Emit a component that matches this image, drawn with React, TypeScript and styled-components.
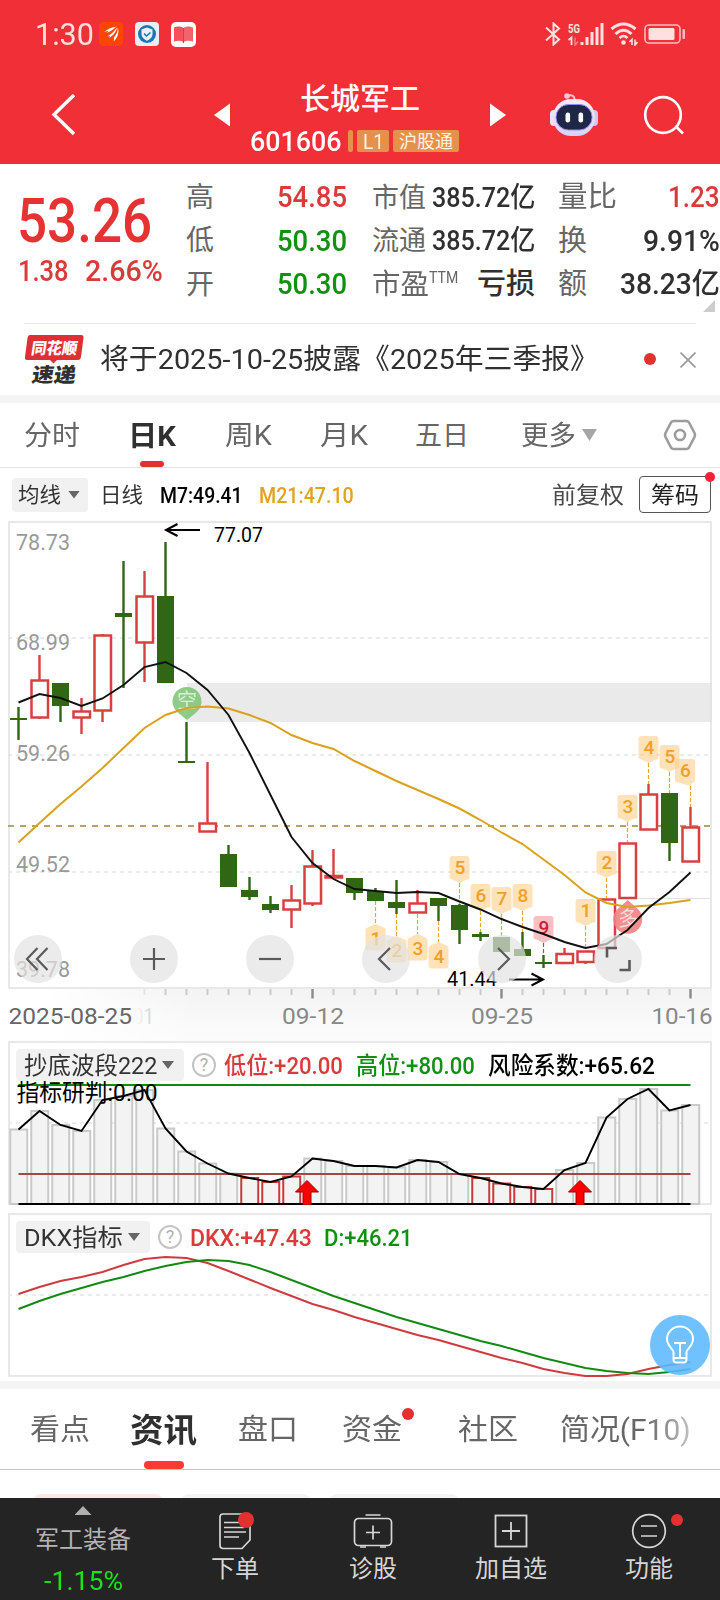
import React, { useLayoutEffect, useRef, useState } from "react";
import styled, { createGlobalStyle } from "styled-components";

const FONT = `Roboto, "Noto Sans CJK SC", sans-serif`;
const RED = "#f12f37";
const UP = "#d93a3a";
const DOWN = "#119011";
const CANDLE_RED = "#d84040";
const CANDLE_GREEN = "#306614";

const Global = createGlobalStyle`
  * { box-sizing: border-box; }
  body { margin: 0; background: #fff; font-family: ${FONT}; }
  svg { display: block; flex: none; }
`;

const Page = styled.div`
  width: 720px;
  height: 1600px;
  overflow: hidden;
  display: flex;
  flex-direction: column;
  background: #fff;
`;

/* ---------- text that is condensed or widened to a given measure ---------- */

const FitBox = styled.span<{ $w: number; $size: number; $color?: string; $weight?: number }>`
  display: inline-block;
  flex: none;
  width: ${(p) => p.$w}px;
  padding-top: 2px;
  font-size: ${(p) => p.$size}px;
  line-height: 1.2;
  font-weight: ${(p) => p.$weight ?? 400};
  color: ${(p) => p.$color ?? "inherit"};
  white-space: nowrap;
`;
const FitInner = styled.span`
  display: inline-block;
  transform-origin: left center;
`;

type FitProps = { w: number; size: number; color?: string; weight?: number; children: React.ReactNode };

function Fit({ w, size, color, weight, children }: FitProps) {
  const ref = useRef<HTMLSpanElement>(null);
  const [scale, setScale] = useState(1);
  useLayoutEffect(() => {
    if (ref.current && ref.current.offsetWidth) setScale(w / ref.current.offsetWidth);
  }, [w, size, children]);
  return (
    <FitBox $w={w} $size={size} $color={color} $weight={weight}>
      <FitInner ref={ref} style={{ transform: `scaleX(${scale})` }}>{children}</FitInner>
    </FitBox>
  );
}

/* ---------- status bar ---------- */

const StatusBar = styled.div`
  height: 68px;
  flex: none;
  display: flex;
  align-items: center;
  background: ${RED};
  padding: 0 34px 0 35px;
`;
const AppIcons = styled.div`
  display: flex;
  gap: 12px;
  margin-left: 5px;
`;
const SystemIcons = styled.div`
  display: flex;
  margin-left: auto;
  gap: 6px;
`;

function Status() {
  const c = "#ffe0e1";
  return (
    <StatusBar>
      <Fit w={59} size={31} color={c}>1:30</Fit>
      <AppIcons>
        <svg width="24" height="24" viewBox="0 0 24 24">
          <rect width="24" height="24" rx="4.5" fill="#ff4500" />
          <path d="M4.500 10.500C8 7 13 5.500 17.500 4.500C14.500 7.500 11.500 9.500 8 10.700C8.500 9.800 9 9.300 9.500 9C7.500 9 6 9.500 4.500 10.500Z" fill="#fff" />
          <path d="M8.500 14.500C12.500 12 15.500 9 17.800 5.500C17.500 9.500 14.500 13.500 10 16C10.500 15.200 11 14.600 11 14C10.200 14 9.300 14.200 8.500 14.500Z" fill="#fff" />
          <path d="M18.800 5.500C20.500 10.500 18.500 16.500 14.500 19.500C15 18 15.200 16.800 14.700 15.700C17.500 12.500 18.700 9.500 18.800 5.500Z" fill="#fff" />
        </svg>
        <svg width="24" height="24" viewBox="0 0 24 24">
          <rect width="24" height="24" rx="4" fill="#e9eef2" />
          <circle cx="12" cy="12" r="9" fill="#1a76b4" />
          <path d="M12 5.500L17.500 7.500V12C17.500 15 15 17.500 12 18.700C9 17.500 6.500 15 6.500 12V7.500Z" fill="#e9f2f8" />
          <path d="M9 11.500L11.500 14L15.500 10.500" fill="none" stroke="#1a76b4" strokeWidth="1.500" />
        </svg>
        <svg width="25" height="25" viewBox="0 0 25 25">
          <rect width="25" height="25" rx="5" fill="#fff" />
          <path d="M3 5.500C6 4 10 4 12.500 6V20C10 18.500 6 18.500 3 19.500Z" fill="#f8505c" />
          <path d="M22 5.500C19 4 15 4 12.500 6V20C15 18.500 19 18.500 22 19.500Z" fill="#f2646c" />
          <path d="M12.500 6V21" stroke="#d93c48" strokeWidth="1" />
        </svg>
      </AppIcons>
      <SystemIcons>
        <svg width="16" height="24" viewBox="0 0 16 24" fill="none" stroke={c} strokeWidth="2">
          <path d="M1 5.500L14 17.500L8.500 22.500V1.500L14 6.500L1 18.500" />
        </svg>
        <svg width="37" height="24" viewBox="0 0 37 24">
          <text x="1" y="10.500" fontSize="12" fontWeight="700" fill={c} textLength="12" lengthAdjust="spacingAndGlyphs">5G</text>
          <path d="M1.500 18L4.500 15.500V23" fill="none" stroke={c} strokeWidth="1.800" />
          <path d="M8 15.500V23L11 19.500" fill="none" stroke={c} strokeWidth="1.500" opacity=".45" />
          <path d="M15 20V23M20 15V23M25 10V23M30 5V23M35 1V23" stroke={c} strokeWidth="3" />
        </svg>
        <svg width="28" height="24" viewBox="0 0 28 24" fill="none" stroke={c}>
          <path d="M1.500 7Q13.500 -3 25.500 7" strokeWidth="3" />
          <path d="M5.500 12Q13.500 4.500 21.500 12" strokeWidth="3" />
          <path d="M9.500 16Q13.500 12 17.500 16" strokeWidth="2.500" />
          <circle cx="13.500" cy="20.500" r="2.300" fill={c} stroke="none" />
          <path d="M19.500 20L22 17.500V23M25 17.500V23L27.500 20" strokeWidth="1.600" />
        </svg>
        <svg width="42" height="24" viewBox="0 0 42 24">
          <rect x="1" y="3" width="35" height="18" rx="4" fill="none" stroke={c} strokeWidth="1.600" opacity=".8" />
          <rect x="4.500" y="6" width="26" height="12" rx="1.500" fill={c} />
          <rect x="38.500" y="7" width="2.500" height="10" rx="1" fill={c} opacity=".8" />
        </svg>
      </SystemIcons>
    </StatusBar>
  );
}

/* ---------- stock header ---------- */

const HeaderBar = styled.header`
  height: 96px;
  flex: none;
  display: flex;
  align-items: center;
  background: ${RED};
  padding-bottom: 2px;
  padding-left: 51px;
  color: #fff;
`;
const HeaderTitle = styled.div`
  width: 220px;
  margin: 0 20px;
  display: flex;
  flex-direction: column;
  align-items: center;
  padding-top: 8px;
`;
const CodeRow = styled.div`
  display: flex;
  align-items: center;
  align-self: flex-start;
  margin-top: 6px;
`;
const Badge = styled.span<{ $w: number; $gap: number }>`
  width: ${(p) => p.$w}px;
  height: 22px;
  margin-left: ${(p) => p.$gap}px;
  border-radius: 2px;
  background: #e5914b;
  color: #fff3e4;
  display: flex;
  align-items: center;
  justify-content: center;
`;
const Spaced = styled.span<{ $left: number }>`
  margin-left: ${(p) => p.$left}px;
`;

function Header() {
  return (
    <HeaderBar>
      <svg width="24" height="42" viewBox="0 0 24 42" fill="none" stroke="#fff" strokeWidth="3.400">
        <path d="M23 1L3 20.500L23 40" />
      </svg>
      <Spaced $left={139}>
        <svg width="16" height="24" viewBox="0 0 16 24"><path d="M0 12L16 .5V23.500Z" fill="#fff" /></svg>
      </Spaced>
      <HeaderTitle>
        <Fit w={120} size={30} weight={500}>长城军工</Fit>
        <CodeRow>
          <Fit w={91} size={28} weight={500}>601606</Fit>
          <Badge $w={5} $gap={7} />
          <Badge $w={32} $gap={4}><Fit w={21} size={20}>L1</Fit></Badge>
          <Badge $w={66} $gap={4}><Fit w={54} size={18}>沪股通</Fit></Badge>
        </CodeRow>
      </HeaderTitle>
      <svg width="16" height="24" viewBox="0 0 16 24"><path d="M16 12L0 .5V23.500Z" fill="#fff" /></svg>
      <Spaced $left={44}>
        <svg width="48" height="46" viewBox="0 0 48 46">
          <defs>
            <linearGradient id="shell" x1="0" y1="0" x2="0" y2="1">
              <stop offset="0" stopColor="#ffe9f2" />
              <stop offset="1" stopColor="#d3d3fb" />
            </linearGradient>
          </defs>
          <path d="M17 4C22 2 25 4 24.500 9" fill="none" stroke="#f5bcd4" strokeWidth="2" />
          <circle cx="17" cy="4" r="2.800" fill="#fbc3d8" />
          <rect x="0" y="18" width="8" height="16" rx="4" fill="#e9e4fc" />
          <rect x="40" y="18" width="8" height="16" rx="4" fill="#cfc6fa" />
          <rect x="3" y="7" width="42" height="37" rx="18" fill="url(#shell)" />
          <rect x="6" y="12.500" width="36" height="25.500" rx="12.500" fill="#1e2748" stroke="#8b8ff0" strokeWidth="1" />
          <rect x="15.500" y="20.500" width="4.600" height="10" rx="2.200" fill="#fff" />
          <rect x="28.500" y="20.500" width="4.600" height="10" rx="2.200" fill="#fff" />
        </svg>
      </Spaced>
      <Spaced $left={45}>
        <svg width="42" height="42" viewBox="0 0 42 42" fill="none" stroke="#fff" strokeWidth="2.700">
          <circle cx="20" cy="21" r="17.800" />
          <path d="M32.500 32L40 39.500" />
        </svg>
      </Spaced>
    </HeaderBar>
  );
}

/* ---------- quote ---------- */

const Quote = styled.section`
  height: 159px;
  flex: none;
  display: flex;
  padding-top: 11px;
  position: relative;
`;
const PriceCol = styled.div`
  width: 186px;
  padding: 7px 0 0 17px;
  display: flex;
  flex-direction: column;
`;
const ChangeRow = styled.div`
  display: flex;
  gap: 16px;
  margin: -6px 0 0 1px;
`;
const StatCol = styled.div<{ $w: number; $gap: number }>`
  width: ${(p) => p.$w}px;
  margin-right: ${(p) => p.$gap}px;
`;
const StatRow = styled.div`
  height: 43.500px;
  display: flex;
  align-items: center;
  justify-content: space-between;
  color: #666;
`;
const Labels = styled.span`
  display: flex;
  align-items: flex-start;
`;
const Corner = styled.i`
  position: absolute;
  right: 5px;
  bottom: 11px;
  border-left: 12px solid transparent;
  border-bottom: 12px solid #ccc;
`;
const Rule = styled.div`
  height: 1px;
  flex: none;
  margin: 0 24px;
  background: #e8e8e8;
`;
const Band = styled.div<{ $top?: number }>`
  height: 8px;
  flex: none;
  margin-top: ${(p) => p.$top ?? 0}px;
  background: #f4f4f4;
`;

const INK = "#303030";

function QuotePanel() {
  return (
    <Quote>
      <PriceCol>
        <Fit w={135} size={62} color="#e53333" weight={500}>53.26</Fit>
        <ChangeRow>
          <Fit w={51} size={29} color={UP} weight={500}>1.38</Fit>
          <Fit w={78} size={29} color={UP} weight={500}>2.66%</Fit>
        </ChangeRow>
      </PriceCol>
      <StatCol $w={161} $gap={25}>
        <StatRow><Fit w={28} size={28}>高</Fit><Fit w={70} size={29} color={UP} weight={500}>54.85</Fit></StatRow>
        <StatRow><Fit w={28} size={28}>低</Fit><Fit w={70} size={29} color={DOWN} weight={500}>50.30</Fit></StatRow>
        <StatRow><Fit w={28} size={28}>开</Fit><Fit w={70} size={29} color={DOWN} weight={500}>50.30</Fit></StatRow>
      </StatCol>
      <StatCol $w={163} $gap={23}>
        <StatRow><Fit w={54} size={27}>市值</Fit><Fit w={103} size={28} color={INK} weight={500}>385.72亿</Fit></StatRow>
        <StatRow><Fit w={54} size={27}>流通</Fit><Fit w={103} size={28} color={INK} weight={500}>385.72亿</Fit></StatRow>
        <StatRow>
          <Labels><Fit w={57} size={28}>市盈</Fit><Fit w={29} size={16}>TTM</Fit></Labels>
          <Fit w={58} size={29} color={INK} weight={500}>亏损</Fit>
        </StatRow>
      </StatCol>
      <StatCol $w={162} $gap={0}>
        <StatRow><Fit w={59} size={29}>量比</Fit><Fit w={52} size={29} color={UP} weight={500}>1.23</Fit></StatRow>
        <StatRow><Fit w={29} size={29}>换</Fit><Fit w={77} size={29} color={INK} weight={500}>9.91%</Fit></StatRow>
        <StatRow><Fit w={29} size={29}>额</Fit><Fit w={100} size={29} color={INK} weight={500}>38.23亿</Fit></StatRow>
      </StatCol>
      <Corner />
    </Quote>
  );
}

/* ---------- notice ---------- */

const NoticeRow = styled.div`
  height: 71px;
  flex: none;
  display: flex;
  align-items: center;
  padding-left: 24px;
  color: #303030;
`;
const RedDot = styled.i<{ $d: number; $color?: string }>`
  display: block;
  width: ${(p) => p.$d}px;
  height: ${(p) => p.$d}px;
  flex: none;
  border-radius: 50%;
  background: ${(p) => p.$color ?? "#e53030"};
`;
const NoticeDot = styled(RedDot)`
  margin: 0 0 1px 45px;
`;

function Notice() {
  return (
    <NoticeRow>
      <svg width="61" height="52" viewBox="24 334 61 52" fontWeight="900">
        <path d="M30 335H81Q84 335 83.500 338L81 357Q80.500 360 78 360H57L53.500 363.500L50 360H27Q24.500 360 25 357L27.500 338Q28 335 30 335Z" fill="#dd3035" />
        <text x="0" y="0" fontSize="16" fill="#fff" textLength="46" lengthAdjust="spacingAndGlyphs" transform="translate(30.500 353.500) skewX(-9)">同花顺</text>
        <text x="0" y="0" fontSize="20" fill="#303030" textLength="44" lengthAdjust="spacingAndGlyphs" transform="translate(31 381.500) skewX(-9)">速递</text>
      </svg>
      <Spaced $left={15}><Fit w={499} size={28.500}>将于2025-10-25披露《2025年三季报》</Fit></Spaced>
      <NoticeDot $d={12} />
      <Spaced $left={24}>
        <svg width="16" height="16" viewBox="0 0 16 16" stroke="#999" strokeWidth="1.600"><path d="M.5 .5L15.500 15.500M15.500 .5L.5 15.500" /></svg>
      </Spaced>
    </NoticeRow>
  );
}

/* ---------- period tabs ---------- */

const PeriodTabs = styled.nav`
  height: 65px;
  flex: none;
  display: flex;
  align-items: center;
  border-bottom: 1px solid #e4e4e4;
  color: #666;
`;
const Tab = styled.div<{ $gap: number; $active?: boolean; $line?: number; $h?: number; $tall?: number }>`
  position: relative;
  height: 100%;
  display: flex;
  align-items: center;
  padding-top: 1px;
  margin-left: ${(p) => p.$gap}px;
  ${(p) =>
    p.$active &&
    `color:#303030;font-weight:700;
     &::after{content:"";position:absolute;bottom:0;left:50%;transform:translateX(-50%);
       width:${p.$line}px;height:${p.$h}px;border-radius:4px;background:${p.$tall ? "#f93b33" : "#e03030"};}`}
`;
const Triangle = styled.i<{ $w: number; $h: number; $color: string; $gap: number; $up?: boolean }>`
  width: ${(p) => p.$w}px;
  height: ${(p) => p.$h}px;
  flex: none;
  margin-left: ${(p) => p.$gap}px;
  background: ${(p) => p.$color};
  clip-path: ${(p) => (p.$up ? "polygon(50% 0, 100% 100%, 0 100%)" : "polygon(0 0, 100% 0, 50% 100%)")};
`;

function Periods() {
  return (
    <PeriodTabs>
      <Tab $gap={24}><Fit w={56} size={27}>分时</Fit></Tab>
      <Tab $gap={48} $active $line={24} $h={6}><Fit w={48} size={28} weight={700}>日K</Fit></Tab>
      <Tab $gap={49}><Fit w={47} size={27}>周K</Fit></Tab>
      <Tab $gap={48}><Fit w={48} size={27}>月K</Fit></Tab>
      <Tab $gap={47}><Fit w={54} size={27}>五日</Fit></Tab>
      <Tab $gap={52}><Fit w={55} size={27}>更多</Fit></Tab>
      <Triangle $w={15} $h={12} $gap={6} $color="#a6a6a6" />
      <Spaced $left={66}>
        <svg width="34" height="32" viewBox="0 0 34 32" fill="none" stroke="#9c9c9c" strokeWidth="2.600" strokeLinejoin="round">
          <path d="M10.500 2H23.500Q25 2 26 3.500L31.500 14Q32.500 16 31.500 18L26 28.500Q25 30 23.500 30H10.500Q9 30 8 28.500L2.500 18Q1.500 16 2.500 14L8 3.500Q9 2 10.500 2Z" />
          <circle cx="17" cy="16" r="5" />
        </svg>
      </Spaced>
    </PeriodTabs>
  );
}

/* ---------- indicator row ---------- */

const IndicatorRow = styled.div`
  height: 53px;
  flex: none;
  display: flex;
  align-items: center;
  padding-left: 12px;
`;
const Chip = styled.div<{ $w: number; $h: number }>`
  width: ${(p) => p.$w}px;
  height: ${(p) => p.$h}px;
  flex: none;
  display: flex;
  align-items: center;
  padding-left: ${(p) => (p.$h > 33 ? 6 : 8)}px;
  border-radius: 4px;
  background: #f1f1f1;
  color: #333;
`;
const OutlineButton = styled.div`
  position: relative;
  width: 72px;
  height: 37px;
  margin-left: 15px;
  display: flex;
  align-items: center;
  justify-content: center;
  border: 1px solid #555;
  border-radius: 4px;
  color: #222;
`;
const CornerDot = styled(RedDot)<{ $top: number; $right: number }>`
  position: absolute;
  top: ${(p) => p.$top}px;
  right: ${(p) => p.$right}px;
`;

function Indicators() {
  return (
    <IndicatorRow>
      <Chip $w={76} $h={34}><Fit w={43} size={21}>均线</Fit><Triangle $w={12} $h={8} $gap={7} $color="#666" /></Chip>
      <Spaced $left={12}><Fit w={43} size={21} color="#333">日线</Fit></Spaced>
      <Spaced $left={17}><Fit w={83} size={21.500} weight={500} color="#000">M7:49.41</Fit></Spaced>
      <Spaced $left={16}><Fit w={95} size={21.500} weight={500} color="#e2a21d">M21:47.10</Fit></Spaced>
      <Spaced $left={198}><Fit w={72} size={23} color="#4a4a4a">前复权</Fit></Spaced>
      <OutlineButton>
        <Fit w={48} size={23}>筹码</Fit>
        <CornerDot $d={10} $color="#ff2035" $top={-5} $right={-5} />
      </OutlineButton>
    </IndicatorRow>
  );
}

/* ---------- charts ---------- */

const cx = (i: number) => 18.5 + 21 * i;
const path = (ys: number[]) => ys.map((y, i) => `${cx(i)},${y}`).join(" ");

/* colour, high, body top, body bottom, low */
const CANDLES: [string, number, number, number, number][] = [
  ["g", 707, 718, 720, 740], ["r", 655, 680.5, 717.5, 719], ["g", 683, 683, 706, 722], ["r", 698, 711.5, 717.5, 734],
  ["r", 634, 635.5, 710.5, 722], ["g", 561, 613, 617, 688], ["r", 571, 596.5, 642.5, 682], ["g", 542, 596, 683, 683],
  ["g", 722, 761, 763, 763], ["r", 762, 823.5, 831.5, 832], ["g", 845, 854, 887, 887], ["g", 877, 890, 897, 900],
  ["g", 896, 904, 910, 913], ["r", 885, 900.5, 909.5, 928], ["r", 850, 866.5, 903.5, 906], ["r", 849, 876, 877.5, 878],
  ["g", 878, 878, 893, 900], ["g", 888, 891, 901, 901], ["g", 880, 902, 908, 914], ["r", 890, 903.5, 912.5, 913],
  ["g", 898, 898, 906, 921], ["g", 904, 905, 930, 944], ["g", 932, 934, 937, 941], ["g", 937, 937, 952, 952],
  ["g", 932, 949, 956, 956], ["g", 955, 962, 964, 968], ["r", 948, 954, 963, 964], ["r", 951, 951.5, 962, 964],
  ["r", 899, 899.5, 948, 948], ["r", 843, 843.5, 898, 898], ["r", 784, 794.5, 829.5, 830], ["g", 793, 793, 843, 861],
  ["r", 807, 827.5, 861.5, 862],
];
const MA7 = [702.5, 694, 698, 706, 698.5, 685, 667, 662, 673, 690, 715, 753, 795, 837, 863, 879, 889, 891, 893, 892, 893, 901.5, 909.5, 919, 927, 934, 942, 948, 944, 930, 908, 892, 872.5];
const MA21 = [842.5, 823, 804, 786.5, 768, 748, 728, 715, 708, 706.5, 708.5, 715, 723, 735, 743, 749, 761, 771, 781, 790, 799, 808.5, 820, 832.5, 844, 859.5, 875, 892.5, 903, 907, 905.5, 903, 900];

/* index, digit, box top, end of the leader */
const PINS: [number, string, number, number][] = [
  [21, "5", 856, 904], [22, "6", 884, 932], [23, "7", 887, 937], [24, "8", 884, 932], [25, "9", 916, 955],
  [27, "1", 899, 948], [28, "2", 851, 898], [29, "3", 795, 842], [30, "4", 736, 784], [31, "5", 745, 793], [32, "6", 759, 807],
];
/* index, digit, tip, start of the leader */
const LOW_PINS: [number, string, number, number][] = [
  [17, "1", 924, 901], [18, "2", 936, 914], [19, "3", 934, 914], [20, "4", 942, 921],
];
const GRID_LABELS: [string, number][] = [["78.73", 549.5], ["68.99", 649.5], ["59.26", 761], ["49.52", 872], ["39.78", 976.5]];
const BARS = [1129.5, 1111, 1125, 1131, 1100, 1096, 1090, 1128.5, 1151.5, 1163.5, 1173.5, 1178, 1182, 1176.5, 1158.5, 1161, 1166, 1166, 1167.5, 1160, 1162, 1174, 1178, 1183.5, 1187, 1189, 1170, 1163, 1117.5, 1099, 1089, 1110.5, 1105];
const DKX = [1294, 1287, 1281, 1277, 1272, 1265, 1259, 1257, 1258, 1263, 1271, 1279.5, 1288, 1296, 1304, 1310, 1317, 1323, 1329, 1335, 1340, 1346, 1352, 1358, 1363, 1369, 1373, 1376, 1376, 1374, 1369, 1365, 1362];
const DLINE = [1309, 1301, 1294, 1288, 1282, 1277, 1271, 1266, 1262, 1260, 1261, 1265, 1272, 1280, 1288, 1296, 1303, 1310, 1317, 1323, 1329, 1335, 1341, 1346, 1352, 1358, 1363, 1368, 1371, 1373, 1374, 1372, 1369];

const Panel = styled.div<{ $h: number; $top?: number }>`
  display: grid;
  flex: none;
  width: 704px;
  height: ${(p) => p.$h}px;
  margin: ${(p) => p.$top ?? 0}px 8px 0;
  & > * { grid-area: 1 / 1; }
`;
const ChartControls = styled.div`
  align-self: end;
  display: flex;
  gap: 68px;
  padding: 0 0 6px 6px;
`;
const RoundButton = styled.button`
  width: 48px;
  height: 48px;
  flex: none;
  padding: 0;
  border: 0;
  border-radius: 50%;
  display: grid;
  place-items: center;
  background: rgba(226, 226, 226, 0.7);
`;

const CONTROL_PATHS = [
  "M12.500 2L2 13L12.500 24M22.500 2L12 13L22.500 24",
  "M2 13H24M13 2V24",
  "M2 13H24",
  "M17 2L6 13L17 24",
  "M9 2L20 13L9 24",
  "M2 11.500V2H12M24.500 14V24H14.500",
];

function KLine() {
  return (
    <Panel $h={468}>
      <svg width="704" height="468" viewBox="8 521 704 468">
        <rect x="187" y="683" width="525" height="39" fill="#eaeaea" />
        <g stroke="#ebebeb" strokeWidth="2" strokeDasharray="4 4">
          <path d="M8 638H710M8 755H710M8 872H710" />
        </g>
        <path d="M618 898.500H710" stroke="#e2e2e2" />
        <rect x="9" y="522" width="702" height="466" fill="none" stroke="#e0e0e0" strokeOpacity=".75" strokeWidth="2" />
        <path d="M8 826H710" stroke="#b9a268" strokeWidth="1.800" strokeDasharray="6 6" />
        {GRID_LABELS.map(([t, y]) => (
          <text key={t} x="16" y={y} fontSize="22.500" fill="#999" textLength="54" lengthAdjust="spacingAndGlyphs">{t}</text>
        ))}
        {CANDLES.map(([k, hi, top, bot, lo], i) => {
          const c = k === "g" ? CANDLE_GREEN : CANDLE_RED;
          return (
            <g key={i}>
              <path d={`M${cx(i)} ${hi}V${top}M${cx(i)} ${bot}V${lo}`} stroke={c} strokeWidth="2.400" />
              {k === "g" ? (
                <rect x={cx(i) - 8.5} y={top} width="17" height={bot - top} fill={c} />
              ) : (
                <rect x={cx(i) - 8} y={top} width="16.500" height={bot - top} fill="#fff" stroke={c} strokeWidth="2.500" />
              )}
            </g>
          );
        })}
        <g opacity=".9">
          <path d="M187 720L179 713.500A14.500 14.500 0 1 1 195 713.500Z" fill="#84c67c" />
          <text x="187" y="708" fontSize="20" fill="#d4f2d0" textAnchor="middle">空</text>
        </g>
        <g opacity=".9">
          <path d="M627.700 900L620 907A14.500 14.500 0 1 0 635.500 907Z" fill="#f28282" />
          <text x="628" y="926" fontSize="20" fill="#fbd6d6" textAnchor="middle">多</text>
        </g>
        {PINS.map(([i, t, top, end]) => {
          const red = t === "9";
          const x = i === 32 ? cx(i) - 5.5 : cx(i);
          const tip = cx(i);
          return (
            <g key={i}>
              <path d={`M${tip} ${top + 27}V${end}`} stroke={red ? "#c04050" : "#e5a92e"} strokeWidth="1.200" strokeDasharray="4 2" />
              <path d={`M${x - 7} ${top}H${x + 7}Q${x + 10} ${top} ${x + 10} ${top + 3}V${top + 22}Q${x + 10} ${top + 23.5} ${x + 7} ${top + 23.5}L${tip} ${top + 27}L${x - 7} ${top + 23.5}Q${x - 10} ${top + 23.5} ${x - 10} ${top + 21}V${top + 3}Q${x - 10} ${top} ${x - 7} ${top}Z`} fill={red ? "#f2969e" : "#ffcf88"} fillOpacity=".6" />
              <text x={x + 0.5} y={top + 18} fontSize="19" fontWeight="500" textAnchor="middle" fill={red ? "#cc2030" : "#f0a028"}>{t}</text>
            </g>
          );
        })}
        {LOW_PINS.map(([i, t, tip, start]) => {
          const x = cx(i);
          return (
            <g key={i}>
              <path d={`M${x} ${start}V${tip}`} stroke="#e5a92e" strokeWidth="1.200" strokeDasharray="4 2" />
              <path d={`M${x} ${tip}L${x + 7} ${tip + 3}Q${x + 10} ${tip + 4} ${x + 10} ${tip + 6}V${tip + 23.5}Q${x + 10} ${tip + 26.5} ${x + 7} ${tip + 26.5}H${x - 7}Q${x - 10} ${tip + 26.5} ${x - 10} ${tip + 23.5}V${tip + 6}Q${x - 10} ${tip + 4} ${x - 7} ${tip + 3}Z`} fill="#ffcf88" fillOpacity=".6" />
              <text x={x + 0.5} y={tip + 20.5} fontSize="19" fontWeight="500" textAnchor="middle" fill="#f0a028">{t}</text>
            </g>
          );
        })}
        <polyline points={path(MA21)} fill="none" stroke="#dba01f" strokeWidth="2" />
        <polyline points={path(MA7)} fill="none" stroke="#111" strokeWidth="1.900" />
        <g fill="none" stroke="#000" strokeWidth="2">
          <path d="M200 530H166M177.500 524L166 530L177.500 536" />
          <path d="M509 979.500H543M531.500 973.500L543 979.500L531.500 985.500" />
        </g>
        <text x="214" y="542" fontSize="20.500" textLength="49" lengthAdjust="spacingAndGlyphs">77.07</text>
        <text x="447" y="986" fontSize="20.500" textLength="50" lengthAdjust="spacingAndGlyphs">41.44</text>
      </svg>
      <ChartControls>
        {CONTROL_PATHS.map((d, i) => (
          <RoundButton key={d}>
            <svg width="26" height="26" viewBox="0 0 26 26" fill="none" stroke="#5a5a5a" strokeWidth={i === 5 ? 2.6 : 2.2}><path d={d} /></svg>
          </RoundButton>
        ))}
      </ChartControls>
    </Panel>
  );
}

const AxisPanel = styled(Panel)`
  background: linear-gradient(90deg, #fff 0, #fff 40px, rgba(255, 255, 255, 0) 190px),
    linear-gradient(#f3f3f3, #f9f9f9 60%, #fbfbfb);
`;

function DateAxis() {
  return (
    <AxisPanel $h={52}>
      <svg width="704" height="52" viewBox="8 989 704 52">
        <defs>
          <linearGradient id="ghost" gradientUnits="userSpaceOnUse" x1="136" y1="0" x2="154" y2="0">
            <stop offset="0" stopColor="#ccc" stopOpacity="0" />
            <stop offset="1" stopColor="#ccc" />
          </linearGradient>
        </defs>
        {CANDLES.map((_, i) => {
          if (i < 6) return null;
          const major = i === 14 || i === 23 || i === 32;
          return <path key={i} d={`M${cx(i)} 989V${major ? 998.5 : 995}`} stroke={major ? "#8a8a8a" : "#cacaca"} strokeWidth={major ? 2.4 : 2} opacity={i === 6 ? 0.4 : 1} />;
        })}
        <g fontSize="22.500" fill="#888">
          <text x="133" y="1024" fill="url(#ghost)" textLength="21" lengthAdjust="spacingAndGlyphs">01</text>
          <text x="8.500" y="1024" fill="#666" textLength="123.500" lengthAdjust="spacingAndGlyphs">2025-08-25</text>
          <text x="282" y="1024" textLength="62" lengthAdjust="spacingAndGlyphs">09-12</text>
          <text x="471" y="1024" textLength="62" lengthAdjust="spacingAndGlyphs">09-25</text>
          <text x="651.500" y="1024" textLength="61" lengthAdjust="spacingAndGlyphs">10-16</text>
        </g>
      </svg>
    </AxisPanel>
  );
}

const PanelHeader = styled.div`
  align-self: start;
  display: flex;
  align-items: center;
  height: 32px;
  margin: 8px 0 0 8px;
`;
const HelpMark = styled.span<{ $gap: number }>`
  width: 24px;
  height: 24px;
  flex: none;
  margin-left: ${(p) => p.$gap}px;
  border: 2px solid #c4c4c4;
  border-radius: 50%;
  display: grid;
  place-items: center;
  color: #b0b0b0;
  font-size: 18px;
  line-height: 1;
`;

function RiskPanel() {
  return (
    <Panel $h={164}>
      <svg width="704" height="164" viewBox="8 1041 704 164">
        <path d="M9 1205V1042H711V1204H9" fill="none" stroke="#e8e8e8" strokeWidth="2" />
        <path d="M8 1123H710" stroke="#ebebeb" strokeWidth="2" strokeDasharray="4 4" />
        {BARS.map((y, i) => (
          <rect key={i} x={cx(i) - 8.25} y={y} width="17" height={1204 - y} fill="#f3f3f3" stroke={y > 1175 ? "#c83a3a" : "#c9c9c9"} strokeWidth="2" />
        ))}
        <path d="M18.500 1085H690.500" stroke="#0f8a0f" strokeWidth="2" />
        <path d="M18.500 1174H690.500" stroke="#a84348" strokeWidth="2" />
        <path d="M18.500 1204H690.500" stroke="#000" strokeWidth="2" />
        <polyline points={path(BARS)} fill="none" stroke="#000" strokeWidth="1.900" />
        {[307, 580].map((x) => (
          <path key={x} d={`M${x} 1180.500L${x + 11.5} 1192H${x + 4}V1205H${x - 4}V1192H${x - 11.5}Z`} fill="#f00" stroke="#900" strokeWidth="1" />
        ))}
        <text x="16.500" y="1101" fontSize="24" textLength="141" lengthAdjust="spacingAndGlyphs">指标研判:0.00</text>
      </svg>
      <PanelHeader>
        <Chip $w={168} $h={32}><Fit w={133} size={24}>抄底波段222</Fit><Triangle $w={12} $h={8} $gap={5} $color="#666" /></Chip>
        <HelpMark $gap={8}>?</HelpMark>
        <Spaced $left={8}><Fit w={119} size={24} weight={500} color={UP}>低位:+20.00</Fit></Spaced>
        <Spaced $left={13}><Fit w={119} size={24} weight={500} color={DOWN}>高位:+80.00</Fit></Spaced>
        <Spaced $left={13}><Fit w={167} size={24} weight={500} color="#000">风险系数:+65.62</Fit></Spaced>
      </PanelHeader>
    </Panel>
  );
}

const HintButton = styled.div`
  justify-self: end;
  align-self: end;
  width: 60px;
  height: 60px;
  margin: 0 2px 2px 0;
  border-radius: 50%;
  display: grid;
  place-items: center;
  background: rgba(92, 184, 255, 0.88);
`;

function DkxPanel() {
  return (
    <Panel $h={164} $top={8}>
      <svg width="704" height="164" viewBox="8 1213 704 164">
        <rect x="9" y="1214" width="702" height="162" fill="none" stroke="#e8e8e8" strokeWidth="2" />
        <path d="M8 1295H710" stroke="#ebebeb" strokeWidth="2" strokeDasharray="4 4" />
        <polyline points={path(DKX)} fill="none" stroke="#cc3b40" strokeWidth="1.900" />
        <polyline points={path(DLINE)} fill="none" stroke="#128a12" strokeWidth="1.900" />
      </svg>
      <PanelHeader>
        <Chip $w={134} $h={32}><Fit w={99} size={24}>DKX指标</Fit><Triangle $w={12} $h={8} $gap={5} $color="#666" /></Chip>
        <HelpMark $gap={8}>?</HelpMark>
        <Spaced $left={8}><Fit w={122} size={24} weight={500} color={UP}>DKX:+47.43</Fit></Spaced>
        <Spaced $left={12}><Fit w={89} size={24} weight={500} color={DOWN}>D:+46.21</Fit></Spaced>
      </PanelHeader>
      <HintButton>
        <svg width="30" height="40" viewBox="0 0 30 40" fill="none" stroke="#fff" strokeWidth="2">
          <path d="M8.500 27C8 24 2 21 2 14A13 12.500 0 0 1 28 14C28 21 22 24 21.500 27V34Q21.500 37.500 19 37.500H11Q8.500 37.500 8.500 34ZM8.500 33H21.500M15 18V33M9 18H21" />
        </svg>
      </HintButton>
    </Panel>
  );
}

/* ---------- content tabs ---------- */

const ContentTabs = styled.nav`
  height: 81px;
  flex: none;
  display: flex;
  align-items: center;
  border-bottom: 1px solid #c6c6c6;
  color: #666;
`;
const Fade = styled.span`
  mask-image: linear-gradient(90deg, #000 65%, rgba(0, 0, 0, 0.4) 100%);
`;
const FilterRow = styled.div`
  flex: 1;
  min-height: 0;
  overflow: hidden;
  display: flex;
  gap: 18px;
  padding: 24px 0 0 33px;
`;
const FilterChip = styled.div<{ $on?: boolean }>`
  width: 130px;
  height: 50px;
  border-radius: 8px;
  background: ${(p) => (p.$on ? "#fde6e8" : "#f4f4f4")};
`;

function Contents() {
  return (
    <>
      <ContentTabs>
        <Tab $gap={30}><Fit w={60} size={29}>看点</Fit></Tab>
        <Tab $gap={40} $active $line={40} $h={8} $tall={1}><Fit w={67} size={33} weight={700}>资讯</Fit></Tab>
        <Tab $gap={41}><Fit w={60} size={29}>盘口</Fit></Tab>
        <Tab $gap={44}>
          <Fit w={60} size={29}>资金</Fit>
          <CornerDot $d={12} $top={19} $right={-12} />
        </Tab>
        <Tab $gap={56}><Fit w={60} size={29}>社区</Fit></Tab>
        <Tab $gap={42}><Fade><Fit w={131} size={29}>简况(F10)</Fit></Fade></Tab>
      </ContentTabs>
      <FilterRow>
        <FilterChip $on />
        <FilterChip />
        <FilterChip />
      </FilterRow>
    </>
  );
}

/* ---------- bottom bar ---------- */

const BottomBar = styled.nav`
  height: 102px;
  flex: none;
  display: flex;
  background: #242424;
`;
const SectorCell = styled.div`
  width: 166px;
  display: flex;
  flex-direction: column;
  align-items: center;
  padding-top: 8px;
`;
const SectorName = styled.span`
  margin-top: 9px;
`;
const SectorChange = styled.span`
  margin-top: 10px;
`;
const NavItem = styled.div`
  width: 138px;
  display: flex;
  flex-direction: column;
  align-items: center;
  padding-top: 14px;
  color: #d6d6d6;
`;
const IconBox = styled.div`
  position: relative;
  width: 40px;
  height: 38px;
  margin-bottom: 3px;
  display: grid;
  place-items: center;
`;

function Bottom() {
  return (
    <BottomBar>
      <SectorCell>
        <Triangle $w={17} $h={9} $gap={0} $color="#b0b0b0" $up />
        <SectorName><Fit w={96} size={24} color="#b4b4b4">军工装备</Fit></SectorName>
        <SectorChange><Fit w={79} size={25} color="#1fe01f">-1.15%</Fit></SectorChange>
      </SectorCell>
      <NavItem>
        <IconBox>
          <svg width="34" height="38" viewBox="0 0 34 38" fill="none" stroke="#d6d6d6" strokeWidth="1.700">
            <path d="M5 2H29Q32 2 32 5V28L24 36.500H5Q2 36.500 2 33.500V5Q2 2 5 2ZM6 10.500H26M6 15.500H26M6 20H28M6 25H21" />
          </svg>
          <CornerDot $d={16} $top={0} $right={1} />
        </IconBox>
        <Fit w={48} size={24}>下单</Fit>
      </NavItem>
      <NavItem>
        <IconBox>
          <svg width="40" height="38" viewBox="0 0 40 38" fill="none" stroke="#d6d6d6" strokeWidth="1.700">
            <rect x="1.500" y="6.500" width="37" height="27" rx="4" />
            <path d="M12.500 3H27.500M20 13.500V27.500M13 20.500H27M7 35H13M27 35H33" />
          </svg>
        </IconBox>
        <Fit w={48} size={24}>诊股</Fit>
      </NavItem>
      <NavItem>
        <IconBox>
          <svg width="34" height="34" viewBox="0 0 34 34" fill="none" stroke="#d6d6d6" strokeWidth="1.800">
            <rect x="1.500" y="1.500" width="31" height="31" />
            <path d="M17 8V26M8 17H26" />
          </svg>
        </IconBox>
        <Fit w={72} size={24}>加自选</Fit>
      </NavItem>
      <NavItem>
        <IconBox>
          <svg width="36" height="36" viewBox="0 0 36 36" fill="none" stroke="#d6d6d6" strokeWidth="1.700">
            <circle cx="18" cy="18" r="16.300" />
            <path d="M10 13H26M10 23H26" />
          </svg>
          <CornerDot $d={12} $top={2} $right={-14} />
        </IconBox>
        <Fit w={48} size={24}>功能</Fit>
      </NavItem>
    </BottomBar>
  );
}

export default function App() {
  return (
    <Page>
      <Global />
      <Status />
      <Header />
      <QuotePanel />
      <Rule />
      <Notice />
      <Band />
      <Periods />
      <Indicators />
      <KLine />
      <DateAxis />
      <RiskPanel />
      <DkxPanel />
      <Band $top={4} />
      <Contents />
      <Bottom />
    </Page>
  );
}
